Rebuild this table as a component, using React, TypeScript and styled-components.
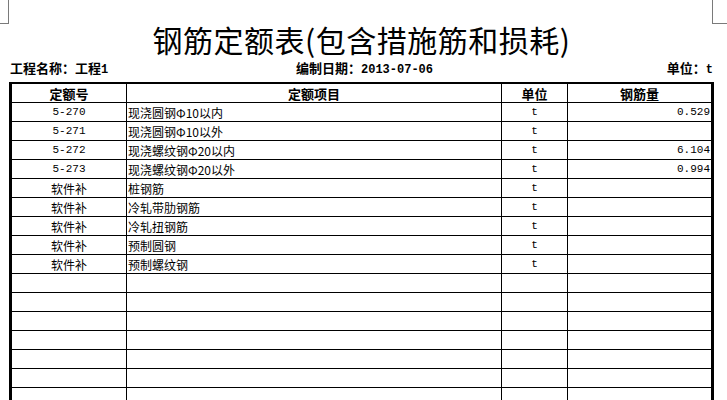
import React from "react";
import styled, { createGlobalStyle } from "styled-components";

const Global = createGlobalStyle`
  html, body { margin: 0; padding: 0; background: #fff; }
  body { font-family: "Noto Sans CJK SC", "Liberation Sans", sans-serif; color: #000; overflow: hidden; }
`;

const Page = styled.div`
  width: 727px;
  height: 400px;
  overflow: hidden;
`;

const TopBar = styled.div`
  display: flex;
  justify-content: space-between;
  height: 24px;
`;

const CropMark = styled.div<{ $side: "left" | "right" }>`
  box-sizing: border-box;
  height: 24px;
  width: ${(p) => (p.$side === "left" ? "9px" : "15px")};
  border-bottom: 1px solid #7a7a7a;
  ${(p) =>
    p.$side === "left"
      ? "border-right: 1px solid #7a7a7a;"
      : "border-left: 1px solid #7a7a7a;"}
`;

const Title = styled.h1`
  margin: 0;
  text-align: center;
  font-family: "Noto Sans CJK SC", sans-serif;
  font-weight: 400;
  font-size: 30px;
  line-height: 30px;
  height: 32px;
  letter-spacing: 0.5px;
  padding-right: 4px;
`;

const InfoBar = styled.div`
  display: grid;
  grid-template-columns: 1fr auto 1fr;
  margin: 4px 14px 0 10px;
  font-size: 13px;
  font-weight: 700;
  line-height: 15px;
`;

const InfoItem = styled.div<{ $align: "left" | "center" | "right" }>`
  text-align: ${(p) => p.$align};
  padding-left: ${(p) => (p.$align === "center" ? "6px" : "0")};
`;

const BoldNum = styled.span`
  font-family: "Liberation Mono", monospace;
  font-weight: 700;
  font-size: 12px;
`;

const Table = styled.div`
  margin: 4px 0 0 9px;
  width: 705px;
  box-sizing: border-box;
  border-left: 3px solid #000;
  border-right: 3px solid #000;
  border-top: 2px solid #000;
`;

const Row = styled.div`
  display: grid;
  grid-template-columns: 115px 375px 66px 1fr;
  height: 19px;
  box-sizing: border-box;
  border-bottom: 1px solid #000;
`;

const Cell = styled.div<{ $align?: "left" | "center" | "right"; $head?: boolean; $last?: boolean; $mono?: boolean }>`
  box-sizing: border-box;
  border-right: ${(p) => (p.$last ? "none" : "1px solid #000")};
  display: flex;
  align-items: center;
  justify-content: ${(p) =>
    p.$align === "center" ? "center" : p.$align === "right" ? "flex-end" : "flex-start"};
  padding: 0 1px;
  font-size: ${(p) => (p.$head ? "13px" : p.$mono ? "11px" : "12px")};
  font-weight: ${(p) => (p.$head ? 700 : 400)};
  font-family: ${(p) =>
    p.$mono ? '"Liberation Mono", monospace' : '"Noto Sans CJK SC", sans-serif'};
  white-space: nowrap;
  overflow: hidden;
`;

type Item = { code: string; name: string; unit: string; qty: string };

const items: Item[] = [
  { code: "5-270", name: "现浇圆钢Φ10以内", unit: "t", qty: "0.529" },
  { code: "5-271", name: "现浇圆钢Φ10以外", unit: "t", qty: "" },
  { code: "5-272", name: "现浇螺纹钢Φ20以内", unit: "t", qty: "6.104" },
  { code: "5-273", name: "现浇螺纹钢Φ20以外", unit: "t", qty: "0.994" },
  { code: "软件补", name: "桩钢筋", unit: "t", qty: "" },
  { code: "软件补", name: "冷轧带肋钢筋", unit: "t", qty: "" },
  { code: "软件补", name: "冷轧扭钢筋", unit: "t", qty: "" },
  { code: "软件补", name: "预制圆钢", unit: "t", qty: "" },
  { code: "软件补", name: "预制螺纹钢", unit: "t", qty: "" },
];

const emptyRows = 8;

export default function App() {
  return (
    <Page>
      <Global />
      <TopBar>
        <CropMark $side="left" />
        <CropMark $side="right" />
      </TopBar>
      <Title>钢筋定额表(包含措施筋和损耗)</Title>
      <InfoBar>
        <InfoItem $align="left">
          工程名称：工程<BoldNum>1</BoldNum>
        </InfoItem>
        <InfoItem $align="center">
          编制日期：<BoldNum>2013-07-06</BoldNum>
        </InfoItem>
        <InfoItem $align="right">
          单位：<BoldNum>t</BoldNum>
        </InfoItem>
      </InfoBar>
      <Table>
        <Row>
          <Cell $head $align="center">定额号</Cell>
          <Cell $head $align="center">定额项目</Cell>
          <Cell $head $align="center">单位</Cell>
          <Cell $head $align="center" $last>钢筋量</Cell>
        </Row>
        {items.map((it, i) => (
          <Row key={i}>
            <Cell $align="center" $mono={/^[0-9-]+$/.test(it.code)}>{it.code}</Cell>
            <Cell $align="left">{it.name}</Cell>
            <Cell $align="center" $mono>{it.unit}</Cell>
            <Cell $align="right" $mono $last>{it.qty}</Cell>
          </Row>
        ))}
        {Array.from({ length: emptyRows }).map((_, i) => (
          <Row key={`e${i}`}>
            <Cell />
            <Cell />
            <Cell />
            <Cell $last />
          </Row>
        ))}
      </Table>
    </Page>
  );
}
